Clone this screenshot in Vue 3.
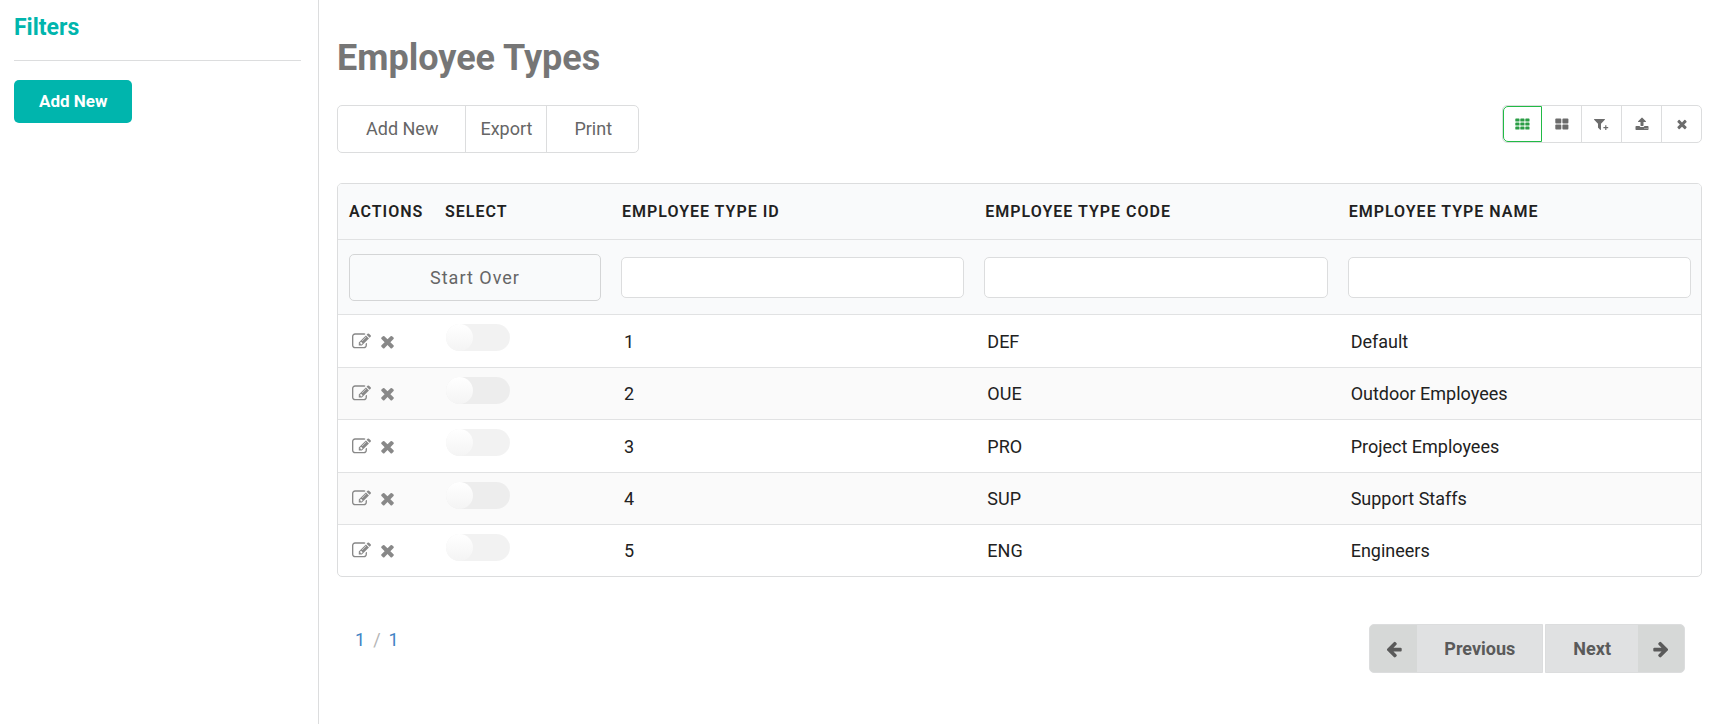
<script setup>
import { ref } from 'vue'

const columns = [
  { key: 'id', label: 'Employee Type Id' },
  { key: 'code', label: 'Employee Type Code' },
  { key: 'name', label: 'Employee Type Name' },
]
const rows = [
  { id: '1', code: 'DEF', name: 'Default' },
  { id: '2', code: 'OUE', name: 'Outdoor Employees' },
  { id: '3', code: 'PRO', name: 'Project Employees' },
  { id: '4', code: 'SUP', name: 'Support Staffs' },
  { id: '5', code: 'ENG', name: 'Engineers' },
]
const filters = ref({ id: '', code: '', name: '' })
const selected = ref([])

const reset = () => {
  filters.value = { id: '', code: '', name: '' }
  selected.value = []
}

const icons = {
  times: 'M1490 1322q0 40-28 68l-136 136q-28 28-68 28t-68-28l-294-294-294 294q-28 28-68 28t-68-28l-136-136q-28-28-28-68t28-68l294-294-294-294q-28-28-28-68t28-68l136-136q28-28 68-28t68 28l294 294 294-294q28-28 68-28t68 28l136 136q28 28 28 68t-28 68l-294 294 294 294q28 28 28 68z',
  edit: 'M888 1184l116-116-152-152-116 116v56h96v96h56zm440-720q-16-16-33 1l-350 350q-17 17-1 33t33-1l350-350q17-17 1-33zm80 594v190q0 119-84.5 203.5t-203.5 84.5h-832q-119 0-203.5-84.5t-84.5-203.5v-832q0-119 84.5-203.5t203.5-84.5h832q63 0 117 25 15 7 18 23 3 17-9 29l-49 49q-14 14-32 8-23-6-45-6h-832q-66 0-113 47t-47 113v832q0 66 47 113t113 47h832q66 0 113-47t47-113v-126q0-13 9-22l64-64q15-15 35-7t20 29zm-96-738l288 288-672 672h-288v-288zm444 132l-92 92-288-288 92-92q28-28 68-28t68 28l152 152q28 28 28 68t-28 68z',
  upload: 'M1344 1472q0-26-19-45t-45-19-45 19-19 45 19 45 45 19 45-19 19-45zm256 0q0-26-19-45t-45-19-45 19-19 45 19 45 45 19 45-19 19-45zm128-224v320q0 40-28 68t-68 28h-1472q-40 0-68-28t-28-68v-320q0-40 28-68t68-28h427q21 56 70.5 92t110.5 36h256q61 0 110.5-36t70.5-92h427q40 0 68 28t28 68zm-325-648q-17 40-59 40h-256v448q0 26-19 45t-45 19h-256q-26 0-45-19t-19-45v-448h-256q-42 0-59-40-17-39 14-69l448-448q18-19 45-19t45 19l448 448q31 30 14 69z',
  filter: 'M1595 295q17 41-14 70l-493 493v742q0 42-39 59-13 5-25 5-27 0-45-19l-256-256q-19-19-19-45v-486l-493-493q-31-29-14-70 17-39 59-39h1280q42 0 59 39z',
  arrow: 'M1664 896v128q0 53-32.5 90.5t-84.5 37.5h-704l293 294q38 36 38 90t-38 90l-75 76q-37 37-90 37-52 0-91-37l-651-652q-37-37-37-90 0-52 37-91l651-650q38-38 91-38 52 0 90 38l75 74q38 38 38 91t-38 91l-293 293h704q52 0 84.5 37.5t32.5 90.5z',
}
</script>

<template>
  <div class="page">
    <aside class="sidebar">
      <h2>Filters</h2>
      <hr />
      <button type="button" class="primary">Add New</button>
    </aside>

    <main class="main">
      <h1>Employee Types</h1>

      <div class="toolbar">
        <div class="group actions-group">
          <button type="button" class="add">Add New</button>
          <button type="button">Export</button>
          <button type="button" class="print">Print</button>
        </div>
        <div class="group view-group">
          <button type="button" class="active" aria-label="Grid view">
            <svg width="15" height="12" viewBox="0 0 15 12">
              <template v-for="y in 3" :key="y">
                <rect v-for="x in 3" :key="x" :x="(x - 1) * 5 + 0.3" :y="(y - 1) * 4 + 0.4" width="4.2" height="3.2" rx="0.7" />
              </template>
            </svg>
          </button>
          <button type="button" aria-label="Card view">
            <svg width="14" height="12" viewBox="0 0 14 12">
              <rect x="0.3" y="0.5" width="6" height="5" rx="0.9" />
              <rect x="7.4" y="0.5" width="6" height="5" rx="0.9" />
              <rect x="0.3" y="6.5" width="6" height="5" rx="0.9" />
              <rect x="7.4" y="6.5" width="6" height="5" rx="0.9" />
            </svg>
          </button>
          <button type="button" aria-label="Add filter">
            <svg width="15" height="14" viewBox="0 0 15 14">
              <g transform="translate(-1.5 0) scale(0.0078)"><path :d="icons.filter" /></g>
              <path d="M11.8 8.2v4.8M9.4 10.6h4.8" fill="none" stroke="currentColor" stroke-width="1.2" />
            </svg>
          </button>
          <button type="button" aria-label="Upload">
            <svg width="14" height="14" viewBox="0 0 1792 1792"><path :d="icons.upload" /></svg>
          </button>
          <button type="button" aria-label="Close">
            <svg width="14" height="14" viewBox="0 0 1792 1792"><path :d="icons.times" /></svg>
          </button>
        </div>
      </div>

      <div class="card">
        <table>
          <colgroup>
            <col class="col-actions" />
            <col class="col-select" />
            <col v-for="c in columns" :key="c.key" />
          </colgroup>
          <thead>
            <tr class="titles">
              <th scope="col">Actions</th>
              <th scope="col">Select</th>
              <th v-for="c in columns" :key="c.key" scope="col">{{ c.label }}</th>
            </tr>
            <tr class="filters">
              <td colspan="2">
                <button type="button" class="reset" @click="reset">Start Over</button>
              </td>
              <td v-for="c in columns" :key="c.key">
                <input v-model="filters[c.key]" type="text" :aria-label="c.label" />
              </td>
            </tr>
          </thead>
          <tbody>
            <tr v-for="row in rows" :key="row.id">
              <td>
                <div class="row-actions">
                  <button type="button" aria-label="Edit">
                    <svg width="19" height="19" viewBox="0 0 1792 1792"><path :d="icons.edit" /></svg>
                  </button>
                  <button type="button" aria-label="Delete">
                    <svg width="19" height="19" viewBox="0 0 1792 1792"><path :d="icons.times" /></svg>
                  </button>
                </div>
              </td>
              <td class="toggle-cell">
                <input v-model="selected" type="checkbox" class="toggle" :value="row.id" :aria-label="'Select ' + row.name" />
              </td>
              <td v-for="c in columns" :key="c.key" class="value">{{ row[c.key] }}</td>
            </tr>
          </tbody>
        </table>
      </div>

      <div class="footer">
        <div class="pages"><a href="#">1</a><span>/</span><a href="#">1</a></div>
        <div class="pager">
          <button type="button" class="prev">
            <span class="arrow"><svg width="18" height="18" viewBox="0 0 1792 1792"><path :d="icons.arrow" /></svg></span>
            <span class="text">Previous</span>
          </button>
          <button type="button" class="next">
            <span class="text">Next</span>
            <span class="arrow"><svg width="18" height="18" viewBox="0 0 1792 1792"><path :d="icons.arrow" transform="matrix(-1 0 0 1 1792 0)" /></svg></span>
          </button>
        </div>
      </div>
    </main>
  </div>
</template>

<style>
body {
  background: #fff;
}
</style>

<style scoped>
.page {
  display: flex;
  min-height: 100vh;
  font-family: Roboto, 'Liberation Sans', sans-serif;
  font-size: 18px;
  line-height: 24px;
  color: #212121;
}
.page *,
.page {
  box-sizing: border-box;
}
button,
input {
  font: inherit;
  margin: 0;
}
button {
  cursor: pointer;
}
svg {
  display: block;
  fill: currentColor;
}
a {
  color: #4183c4;
  text-decoration: none;
}

.sidebar {
  flex: 0 0 319px;
  padding: 13px 17px 12px 14px;
  border-right: 1px solid #dcddde;
}
h2 {
  margin: 0;
  font-size: 23px;
  line-height: 30px;
  font-weight: 700;
  color: #00b5ad;
}
hr {
  margin: 17px 0 19px;
  border: 0;
  border-top: 1px solid #dcddde;
}
.primary {
  height: 43px;
  padding: 0 25px 2px;
  border: 0;
  border-radius: 5px;
  background: #00b5ad;
  color: #fff;
  font-size: 17px;
  font-weight: 700;
}

.main {
  flex: 1;
  min-width: 0;
  padding: 34px 16px 24px 18px;
}
h1 {
  margin: 0;
  font-size: 36px;
  line-height: 48px;
  font-weight: 700;
  color: #767676;
}
.toolbar {
  display: flex;
  justify-content: space-between;
  align-items: flex-start;
  margin: 23px 0 30px;
}
.group {
  display: flex;
  border: 1px solid #dcddde;
  border-radius: 5px;
}
.group button {
  border: 0;
  background: transparent;
  color: #666;
}
.group button + button {
  border-left: 1px solid #dcddde;
}
.actions-group button {
  height: 46px;
  padding: 0 14px;
}
.actions-group .add {
  padding: 0 27px 0 28px;
}
.actions-group .print {
  padding: 0 26px 0 27px;
}
.view-group button {
  display: flex;
  align-items: center;
  justify-content: center;
  width: 40px;
  height: 36px;
  padding: 0;
  color: #6c6c6c;
}
.view-group .active {
  width: 39px;
  border: 1px solid #21ba45;
  border-radius: 5px 0 0 5px;
  color: #2a9d45;
}
.view-group .active + button {
  width: 39px;
  border-left: 0;
}

.card {
  border: 1px solid #dcddde;
  border-radius: 5px;
  overflow: hidden;
}
table {
  width: 100%;
  table-layout: fixed;
  border-collapse: separate;
  border-spacing: 0;
}
.col-actions {
  width: 96px;
}
.col-select {
  width: 177px;
}
td,
th {
  padding: 0 10px;
  text-align: left;
}
thead th,
thead td {
  background: #f9fafb;
  border-bottom: 1px solid #e1e2e3;
}
.titles th {
  height: 56px;
  padding: 0 0 0 11px;
  font-size: 16px;
  font-weight: 600;
  letter-spacing: 1px;
  text-transform: uppercase;
  white-space: nowrap;
}
.filters td {
  height: 75px;
}
.filters td:first-child {
  padding-left: 11px;
}
.reset {
  display: block;
  width: 100%;
  height: 47px;
  padding: 2px 0 0;
  border: 1px solid #d4d5d6;
  border-radius: 5px;
  background: transparent;
  color: #666;
  letter-spacing: 1px;
}
.filters input {
  display: block;
  width: 100%;
  height: 41px;
  padding: 0 12px;
  border: 1px solid #dcddde;
  border-radius: 5px;
  background: #fff;
}
tbody td {
  height: 52px;
  border-bottom: 1px solid #e1e2e3;
}
tbody tr:nth-child(odd) td {
  height: 53px;
}
tbody tr:nth-child(even) td {
  background: #fafafa;
}
tbody tr:last-child td {
  height: 51px;
  border-bottom: 0;
}
tbody .value {
  padding: 1px 12px 0 13px;
}
.row-actions {
  display: flex;
  gap: 7px;
  padding-left: 4px;
}
.row-actions button {
  padding: 0;
  border: 0;
  background: transparent;
  color: #888;
}
.toggle-cell {
  padding: 0 12px 7px;
}
.toggle {
  display: block;
  appearance: none;
  width: 64px;
  height: 27px;
  border-radius: 14px;
  background: rgba(0, 0, 0, 0.05);
  cursor: pointer;
}
.toggle::before {
  content: '';
  display: block;
  width: 27px;
  height: 27px;
  border-radius: 50%;
  background: linear-gradient(#fff, #f4f4f4);
}
.toggle:checked::before {
  margin-left: auto;
}

.footer {
  display: flex;
  justify-content: space-between;
  padding: 47px 17px 0 18px;
}
.pages {
  display: flex;
  gap: 8px;
  padding-top: 4px;
}
.pages span {
  color: #b5b5b5;
}
.pager {
  display: flex;
  gap: 2px;
}
.pager button {
  display: flex;
  height: 49px;
  padding: 0;
  border: 1px solid #dcddde;
  background: #e0e1e2;
  color: #5a5a5a;
  font-weight: 700;
  overflow: hidden;
}
.pager .prev {
  border-radius: 5px 0 0 5px;
}
.pager .next {
  border-radius: 0 5px 5px 0;
}
.arrow {
  display: flex;
  align-items: center;
  justify-content: center;
  width: 47px;
  height: 100%;
  background: #d6d8d7;
}
.next .arrow {
  width: 46px;
}
.text {
  display: flex;
  align-items: center;
  height: 100%;
  padding: 0 27px;
}
</style>
